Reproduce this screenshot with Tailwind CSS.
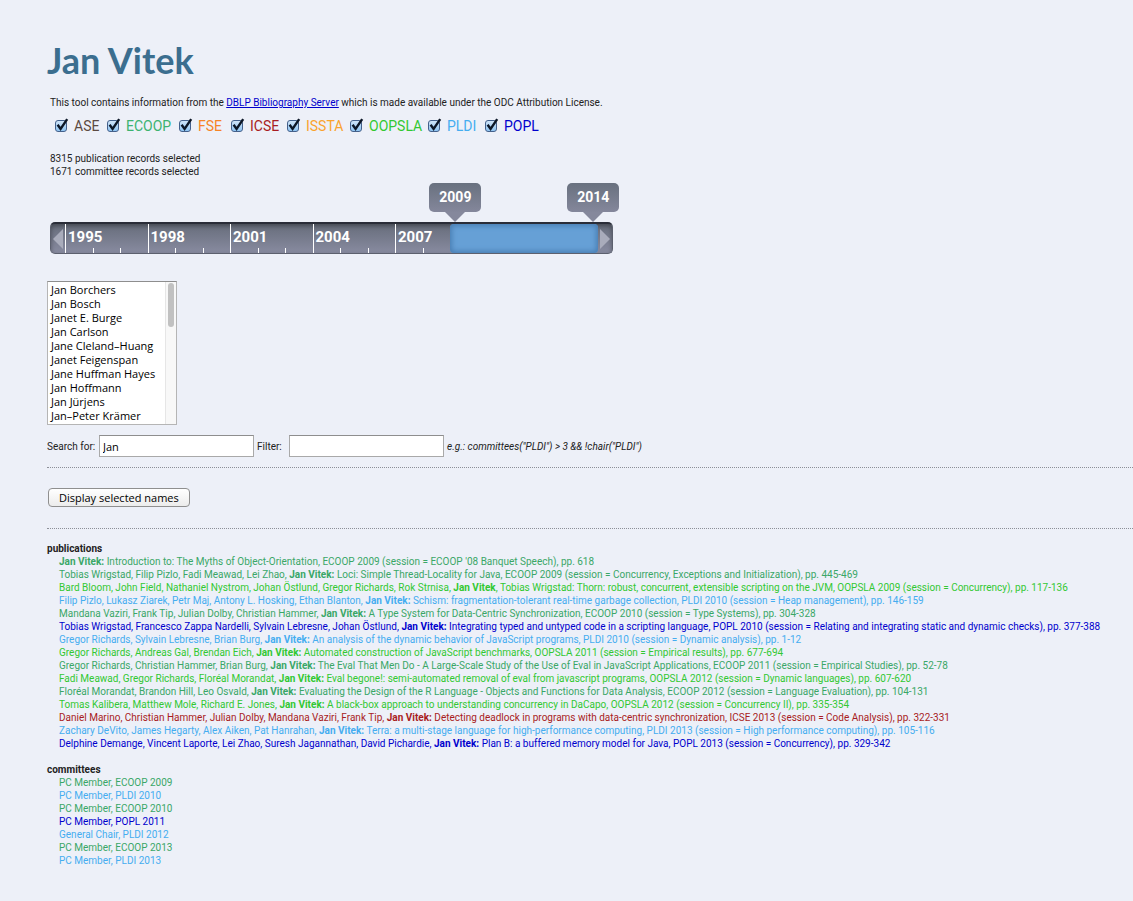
<!DOCTYPE html>
<html lang="en">
<head>
<meta charset="utf-8">
<meta name="viewport" content="width=device-width, initial-scale=1">
<title>Jan Vitek</title>
<script src="https://cdn.jsdelivr.net/npm/@tailwindcss/browser@4"></script>
</head>
<body class="bg-[#edf0f8] pl-[47px] pt-10 pb-8 font-['Roboto','Lato',sans-serif] text-[10px] leading-[13px] text-[#222]">
<svg class="hidden" aria-hidden="true">
  <symbol id="tick" viewBox="0 0 14 14"><path d="M2.6 6.8 L5.6 11 L12.2 1.2" fill="none" stroke="#0c1626" stroke-width="2.4"/></symbol>
</svg>
<header>
  <h1 class="font-['Lato',sans-serif] text-[36px] leading-10 font-bold text-[#3b6e8f]">Jan Vitek</h1>
  <p class="mt-4 pl-[3px]">This tool contains information from the <a href="#" class="text-[#0000cc] underline">DBLP Bibliography Server</a> which is made available under the ODC Attribution License.</p>
  <div class="mt-[7px] grid grid-cols-[52px_72px_52px_56px_63px_78px_57px_auto] pl-2 text-sm leading-5">
    <label class="relative flex items-center gap-[7px] text-[#5c4a42]"><input type="checkbox" checked class="size-3 appearance-none rounded-[3px] border border-[#44618c] bg-linear-to-b from-[#cfe4f8] to-[#8fc4f2]"><svg class="absolute left-0 top-0.5 size-3.5"><use href="#tick"/></svg>ASE</label>
    <label class="relative flex items-center gap-[7px] text-[#3cb371]"><input type="checkbox" checked class="size-3 appearance-none rounded-[3px] border border-[#44618c] bg-linear-to-b from-[#cfe4f8] to-[#8fc4f2]"><svg class="absolute left-0 top-0.5 size-3.5"><use href="#tick"/></svg>ECOOP</label>
    <label class="relative flex items-center gap-[7px] text-[#f68326]"><input type="checkbox" checked class="size-3 appearance-none rounded-[3px] border border-[#44618c] bg-linear-to-b from-[#cfe4f8] to-[#8fc4f2]"><svg class="absolute left-0 top-0.5 size-3.5"><use href="#tick"/></svg>FSE</label>
    <label class="relative flex items-center gap-[7px] text-[#a81c22]"><input type="checkbox" checked class="size-3 appearance-none rounded-[3px] border border-[#44618c] bg-linear-to-b from-[#cfe4f8] to-[#8fc4f2]"><svg class="absolute left-0 top-0.5 size-3.5"><use href="#tick"/></svg>ICSE</label>
    <label class="relative flex items-center gap-[7px] text-[#faa32d]"><input type="checkbox" checked class="size-3 appearance-none rounded-[3px] border border-[#44618c] bg-linear-to-b from-[#cfe4f8] to-[#8fc4f2]"><svg class="absolute left-0 top-0.5 size-3.5"><use href="#tick"/></svg>ISSTA</label>
    <label class="relative flex items-center gap-[7px] text-[#32c832]"><input type="checkbox" checked class="size-3 appearance-none rounded-[3px] border border-[#44618c] bg-linear-to-b from-[#cfe4f8] to-[#8fc4f2]"><svg class="absolute left-0 top-0.5 size-3.5"><use href="#tick"/></svg>OOPSLA</label>
    <label class="relative flex items-center gap-[7px] text-[#45adf0]"><input type="checkbox" checked class="size-3 appearance-none rounded-[3px] border border-[#44618c] bg-linear-to-b from-[#cfe4f8] to-[#8fc4f2]"><svg class="absolute left-0 top-0.5 size-3.5"><use href="#tick"/></svg>PLDI</label>
    <label class="relative flex items-center gap-[7px] text-[#0000cd]"><input type="checkbox" checked class="size-3 appearance-none rounded-[3px] border border-[#44618c] bg-linear-to-b from-[#cfe4f8] to-[#8fc4f2]"><svg class="absolute left-0 top-0.5 size-3.5"><use href="#tick"/></svg>POPL</label>
  </div>
  <p class="mt-4 pl-[3px]">8315 publication records selected<br>1671 committee records selected</p>
</header>

<section class="relative ml-[3px] mt-11 w-full max-w-[563px] text-[15px] font-bold text-white" aria-label="Year range">
  <div class="flex h-8 overflow-hidden rounded-[5px] border border-[#5c606e] border-t-2 border-t-[#2a2d38] bg-linear-to-b from-[#676d7b] to-[#888ba0] shadow-[inset_0_2px_4px_rgba(0,0,0,0.35)]">
    <button class="flex w-3.5 items-center justify-end pr-0.5" aria-label="Earlier"><svg class="h-5 w-2.5" viewBox="0 0 10 20"><path d="M10 0V20L0 10Z" fill="#a9acbb"/></svg></button>
    <div class="grid w-[385px] shrink grid-cols-14">
      <span class="border-l border-white pl-0.5 leading-[26px]">1995</span><i class="h-[5px] self-end border-l border-white"></i><i class="h-[5px] self-end border-l border-white"></i>
      <span class="border-l border-white pl-0.5 leading-[26px]">1998</span><i class="h-[5px] self-end border-l border-white"></i><i class="h-[5px] self-end border-l border-white"></i>
      <span class="border-l border-white pl-0.5 leading-[26px]">2001</span><i class="h-[5px] self-end border-l border-white"></i><i class="h-[5px] self-end border-l border-white"></i>
      <span class="border-l border-white pl-0.5 leading-[26px]">2004</span><i class="h-[5px] self-end border-l border-white"></i><i class="h-[5px] self-end border-l border-white"></i>
      <span class="border-l border-white pl-0.5 leading-[26px]">2007</span><i class="h-[5px] self-end border-l border-white"></i>
    </div>
    <div class="flex-1 rounded-[4px] bg-[#66a0d6] shadow-[inset_0_0_5px_2px_#4a7fb4]"></div>
    <button class="flex w-3.5 items-center justify-start pl-0.5" aria-label="Later"><svg class="h-5 w-2.5" viewBox="0 0 10 20"><path d="M0 0V20L10 10Z" fill="#a9acbb"/></svg></button>
  </div>
  <div class="absolute bottom-full left-[72%] flex -translate-x-1/2 flex-col items-center">
    <span class="w-[52px] rounded-[5px] bg-linear-to-b from-[#69717f] to-[#84879b] text-center text-sm leading-[29px]">2009</span>
    <svg class="h-2.5 w-5" viewBox="0 0 20 10"><path d="M0 0H20L10 10Z" fill="#85889c"/></svg>
  </div>
  <div class="absolute bottom-full left-[96.5%] flex -translate-x-1/2 flex-col items-center">
    <span class="w-[52px] rounded-[5px] bg-linear-to-b from-[#69717f] to-[#84879b] text-center text-sm leading-[29px]">2014</span>
    <svg class="h-2.5 w-5" viewBox="0 0 20 10"><path d="M0 0H20L10 10Z" fill="#85889c"/></svg>
  </div>
</section>

<main>
  <div class="relative mt-[27px] h-36 w-[130px] overflow-hidden border border-[#b5b5b5] border-t-[#8e8e8e] bg-white text-black">
    <select multiple size="10" aria-label="Names" class="block h-full w-full overflow-y-scroll font-['Open_Sans','Noto_Sans',sans-serif] text-[11px] [scrollbar-width:none]">
      <option class="h-3.5 min-h-0 px-[3px] py-0 leading-[14px]">Jan Borchers</option>
      <option class="h-3.5 min-h-0 px-[3px] py-0 leading-[14px]">Jan Bosch</option>
      <option class="h-3.5 min-h-0 px-[3px] py-0 leading-[14px]">Janet E. Burge</option>
      <option class="h-3.5 min-h-0 px-[3px] py-0 leading-[14px]">Jan Carlson</option>
      <option class="h-3.5 min-h-0 px-[3px] py-0 leading-[14px]">Jane Cleland–Huang</option>
      <option class="h-3.5 min-h-0 px-[3px] py-0 leading-[14px]">Janet Feigenspan</option>
      <option class="h-3.5 min-h-0 px-[3px] py-0 leading-[14px]">Jane Huffman Hayes</option>
      <option class="h-3.5 min-h-0 px-[3px] py-0 leading-[14px]">Jan Hoffmann</option>
      <option class="h-3.5 min-h-0 px-[3px] py-0 leading-[14px]">Jan Jürjens</option>
      <option class="h-3.5 min-h-0 px-[3px] py-0 leading-[14px]">Jan–Peter Krämer</option>
    </select>
    <div class="pointer-events-none absolute inset-y-0 right-0 w-[11px] border-l border-[#e6e6e6] bg-[#f8f8f8] pl-0.5 pt-px"><div class="h-11 w-1.5 rounded-full bg-[#c1c1c1]"></div></div>
  </div>

  <div class="mt-2.5 flex items-center">
    <label for="search" class="w-[52px]">Search for:</label>
    <input id="search" type="text" value="Jan" class="h-[22px] w-[155px] border border-[#a9a9a9] border-t-[#8e8e8e] bg-white px-[3px] font-['Open_Sans','Noto_Sans',sans-serif] text-[11px] text-black">
    <label for="filter" class="ml-[3px] w-8">Filter:</label>
    <input id="filter" type="text" class="h-[22px] w-[155px] border border-[#a9a9a9] border-t-[#8e8e8e] bg-white px-[3px] font-['Open_Sans','Noto_Sans',sans-serif] text-[11px] text-black">
    <em class="ml-[3px]">e.g.: committees("PLDI") &gt; 3 &amp;&amp; !chair("PLDI")</em>
  </div>

  <div class="mt-2.5 border-y border-dotted border-[#8c8f98] pl-px pt-5 pb-[21px]">
    <button class="block h-[19px] rounded-[4px] border border-[#8f8f8f] bg-linear-to-b from-white to-[#ececec] px-2.5 font-['Open_Sans','Noto_Sans',sans-serif] text-[11px] leading-4 text-black">Display selected names</button>
  </div>

  <section class="mt-[13px] whitespace-nowrap">
    <h2 class="font-bold">publications</h2>
    <ul class="pl-3">
      <li class="text-[#3aa767]"><b>Jan Vitek:</b> Introduction to: The Myths of Object-Orientation, ECOOP 2009 (session = ECOOP '08 Banquet Speech), pp. 618</li>
      <li class="text-[#3aa767]">Tobias Wrigstad, Filip Pizlo, Fadi Meawad, Lei Zhao, <b>Jan Vitek:</b> Loci: Simple Thread-Locality for Java, ECOOP 2009 (session = Concurrency, Exceptions and Initialization), pp. 445-469</li>
      <li class="text-[#32c832]">Bard Bloom, John Field, Nathaniel Nystrom, Johan Östlund, Gregor Richards, Rok Strnisa, <b>Jan Vitek</b>, Tobias Wrigstad: Thorn: robust, concurrent, extensible scripting on the JVM, OOPSLA 2009 (session = Concurrency), pp. 117-136</li>
      <li class="text-[#45adf0]">Filip Pizlo, Lukasz Ziarek, Petr Maj, Antony L. Hosking, Ethan Blanton, <b>Jan Vitek:</b> Schism: fragmentation-tolerant real-time garbage collection, PLDI 2010 (session = Heap management), pp. 146-159</li>
      <li class="text-[#3aa767]">Mandana Vaziri, Frank Tip, Julian Dolby, Christian Hammer, <b>Jan Vitek:</b> A Type System for Data-Centric Synchronization, ECOOP 2010 (session = Type Systems), pp. 304-328</li>
      <li class="text-[#0000cd]">Tobias Wrigstad, Francesco Zappa Nardelli, Sylvain Lebresne, Johan Östlund, <b>Jan Vitek:</b> Integrating typed and untyped code in a scripting language, POPL 2010 (session = Relating and integrating static and dynamic checks), pp. 377-388</li>
      <li class="text-[#45adf0]">Gregor Richards, Sylvain Lebresne, Brian Burg, <b>Jan Vitek:</b> An analysis of the dynamic behavior of JavaScript programs, PLDI 2010 (session = Dynamic analysis), pp. 1-12</li>
      <li class="text-[#32c832]">Gregor Richards, Andreas Gal, Brendan Eich, <b>Jan Vitek:</b> Automated construction of JavaScript benchmarks, OOPSLA 2011 (session = Empirical results), pp. 677-694</li>
      <li class="text-[#3aa767]">Gregor Richards, Christian Hammer, Brian Burg, <b>Jan Vitek:</b> The Eval That Men Do - A Large-Scale Study of the Use of Eval in JavaScript Applications, ECOOP 2011 (session = Empirical Studies), pp. 52-78</li>
      <li class="text-[#32c832]">Fadi Meawad, Gregor Richards, Floréal Morandat, <b>Jan Vitek:</b> Eval begone!: semi-automated removal of eval from javascript programs, OOPSLA 2012 (session = Dynamic languages), pp. 607-620</li>
      <li class="text-[#3aa767]">Floréal Morandat, Brandon Hill, Leo Osvald, <b>Jan Vitek:</b> Evaluating the Design of the R Language - Objects and Functions for Data Analysis, ECOOP 2012 (session = Language Evaluation), pp. 104-131</li>
      <li class="text-[#32c832]">Tomas Kalibera, Matthew Mole, Richard E. Jones, <b>Jan Vitek:</b> A black-box approach to understanding concurrency in DaCapo, OOPSLA 2012 (session = Concurrency II), pp. 335-354</li>
      <li class="text-[#a81c22]">Daniel Marino, Christian Hammer, Julian Dolby, Mandana Vaziri, Frank Tip, <b>Jan Vitek:</b> Detecting deadlock in programs with data-centric synchronization, ICSE 2013 (session = Code Analysis), pp. 322-331</li>
      <li class="text-[#45adf0]">Zachary DeVito, James Hegarty, Alex Aiken, Pat Hanrahan, <b>Jan Vitek:</b> Terra: a multi-stage language for high-performance computing, PLDI 2013 (session = High performance computing), pp. 105-116</li>
      <li class="text-[#0000cd]">Delphine Demange, Vincent Laporte, Lei Zhao, Suresh Jagannathan, David Pichardie, <b>Jan Vitek:</b> Plan B: a buffered memory model for Java, POPL 2013 (session = Concurrency), pp. 329-342</li>
    </ul>
    <h2 class="mt-[13px] font-bold">committees</h2>
    <ul class="pl-3">
      <li class="text-[#3aa767]">PC Member, ECOOP 2009</li>
      <li class="text-[#45adf0]">PC Member, PLDI 2010</li>
      <li class="text-[#3aa767]">PC Member, ECOOP 2010</li>
      <li class="text-[#0000cd]">PC Member, POPL 2011</li>
      <li class="text-[#45adf0]">General Chair, PLDI 2012</li>
      <li class="text-[#3aa767]">PC Member, ECOOP 2013</li>
      <li class="text-[#45adf0]">PC Member, PLDI 2013</li>
    </ul>
  </section>
</main>
</body>
</html>
